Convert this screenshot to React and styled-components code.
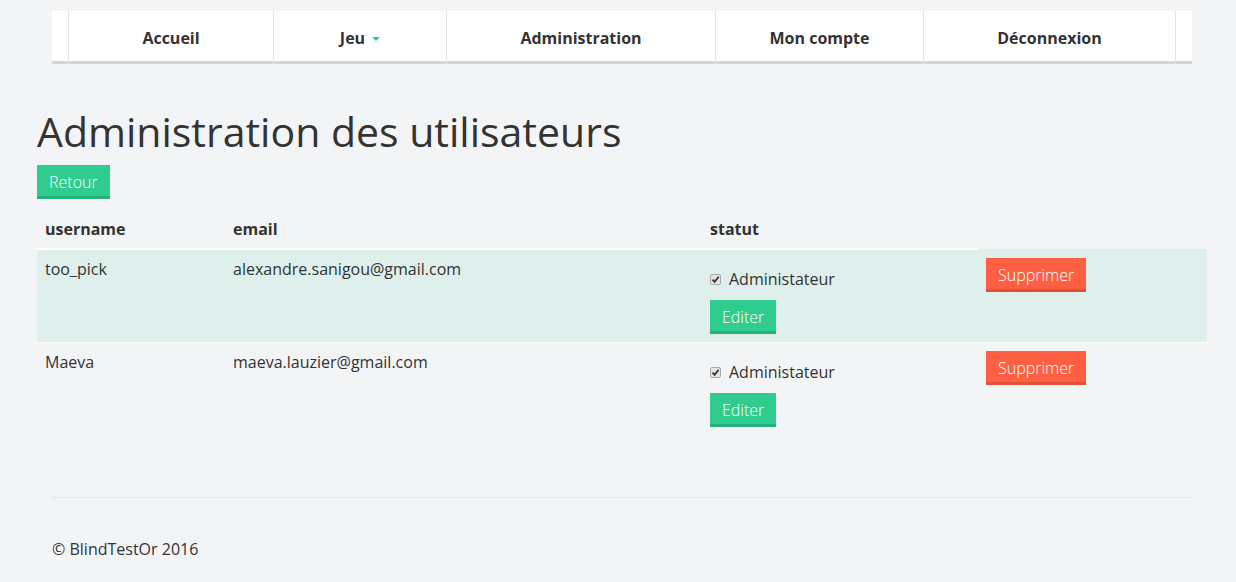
import React from "react";
import styled, { createGlobalStyle } from "styled-components";

const Global = createGlobalStyle`
  html, body { margin: 0; padding: 0; }
  body {
    background: #f3f4f6;
    font-family: "Open Sans", "Liberation Sans", sans-serif;
    color: #333;
    font-size: 16px;
    line-height: 22px;
  }
`;

const Page = styled.div`
  padding-top: 11px;
`;

const Nav = styled.nav`
  width: 1140px;
  margin-left: 52px;
  box-sizing: border-box;
  height: 53px;
  padding: 0 16px;
  background: #fff;
  box-shadow: inset 0 -3px 0 #d5d5d5;
  display: flex;
`;

const NavList = styled.ul`
  display: flex;
  margin: 0;
  padding: 0;
  list-style: none;
  border-left: 1px solid #e3e3e3;
`;

const NavItem = styled.li`
  width: ${(p) => p.$w}px;
  box-sizing: border-box;
  border-right: 1px solid #e3e3e3;
  display: flex;
  align-items: center;
  justify-content: center;
  font-weight: 700;
  font-size: 16px;
  color: #333;
`;

const Caret = styled.span`
  display: inline-block;
  width: 0;
  height: 0;
  margin-left: 7px;
  margin-top: 2px;
  border-left: 4px solid transparent;
  border-right: 4px solid transparent;
  border-top: 4px solid #2ecc8e;
`;

const Main = styled.main`
  padding-left: 37px;
  width: 1170px;
`;

const Title = styled.h1`
  margin: 45px 0 0;
  font-size: 41px;
  line-height: 44px;
  font-weight: 400;
  color: #333;
`;

const Button = styled.button`
  display: inline-block;
  box-sizing: border-box;
  border: none;
  border-bottom: 3px solid ${(p) => (p.$danger ? "#dd5237" : "#25b07a")};
  background: ${(p) => (p.$danger ? "#ff5f43" : "#2ecc8e")};
  color: #fff;
  font-family: "Open Sans", "Liberation Sans", sans-serif;
  font-weight: 300;
  font-size: 16px;
  line-height: 22px;
  height: ${(p) => p.$h || 34}px;
  padding: 5px 12px 3px;
  cursor: pointer;
`;

const BackRow = styled.div`
  margin-top: 12px;
`;

const Table = styled.table`
  margin-top: 11px;
  width: 1170px;
  border-collapse: collapse;
  table-layout: fixed;
`;

const Th = styled.th`
  text-align: left;
  font-weight: 700;
  padding: 8px;
  line-height: 22px;
  border-bottom: 2px solid ${(p) => (p.$blank ? "transparent" : "#fff")};
`;

const Tr = styled.tr`
  background: ${(p) => (p.$active ? "#dfefeb" : "transparent")};
  border-top: 1px solid #fcfcfd;
`;

const Td = styled.td`
  vertical-align: top;
  padding: 8px;
  line-height: 22px;
`;

const CheckLine = styled.label`
  display: flex;
  align-items: center;
  margin-top: 10px;
  gap: 8px;
`;

const Box = styled.span`
  width: 11px;
  height: 11px;
  box-sizing: border-box;
  border: 1px solid #a9a9a9;
  border-radius: 2px;
  background: #e4e4e4;
  display: inline-flex;
  align-items: center;
  justify-content: center;
`;

const EditRow = styled.div`
  margin-top: 10px;
`;

const Footer = styled.footer`
  width: 1140px;
  margin: 62px 0 0 52px;
  border-top: 1px solid #e6e7e9;
  padding-top: 40px;
  padding-bottom: 22px;
`;

const Check = () => (
  <Box>
    <svg width="9" height="9" viewBox="0 0 9 9">
      <path d="M1.5 4.6 L3.6 6.8 L7.6 1.8" fill="none" stroke="#333" strokeWidth="1.8" />
    </svg>
  </Box>
);

const users = [
  { name: "too_pick", email: "alexandre.sanigou@gmail.com", active: true },
  { name: "Maeva", email: "maeva.lauzier@gmail.com", active: false },
];

export default function App() {
  return (
    <Page>
      <Global />
      <Nav>
        <NavList>
          <NavItem $w={205}>Accueil</NavItem>
          <NavItem $w={173}>
            Jeu <Caret />
          </NavItem>
          <NavItem $w={269}>Administration</NavItem>
          <NavItem $w={208}>Mon compte</NavItem>
          <NavItem $w={252}>Déconnexion</NavItem>
        </NavList>
      </Nav>
      <Main>
        <Title>Administration des utilisateurs</Title>
        <BackRow>
          <Button>Retour</Button>
        </BackRow>
        <Table>
          <colgroup>
            <col style={{ width: 188 }} />
            <col style={{ width: 477 }} />
            <col style={{ width: 276 }} />
            <col style={{ width: 229 }} />
          </colgroup>
          <thead>
            <tr>
              <Th>username</Th>
              <Th>email</Th>
              <Th>statut</Th>
              <Th $blank />
            </tr>
          </thead>
          <tbody>
            {users.map((u) => (
              <Tr key={u.name} $active={u.active}>
                <Td>{u.name}</Td>
                <Td>{u.email}</Td>
                <Td>
                  <CheckLine>
                    <Check />
                    Administateur
                  </CheckLine>
                  <EditRow>
                    <Button>Editer</Button>
                  </EditRow>
                </Td>
                <Td>
                  <Button $danger>Supprimer</Button>
                </Td>
              </Tr>
            ))}
          </tbody>
        </Table>
      </Main>
      <Footer>© BlindTestOr 2016</Footer>
    </Page>
  );
}
